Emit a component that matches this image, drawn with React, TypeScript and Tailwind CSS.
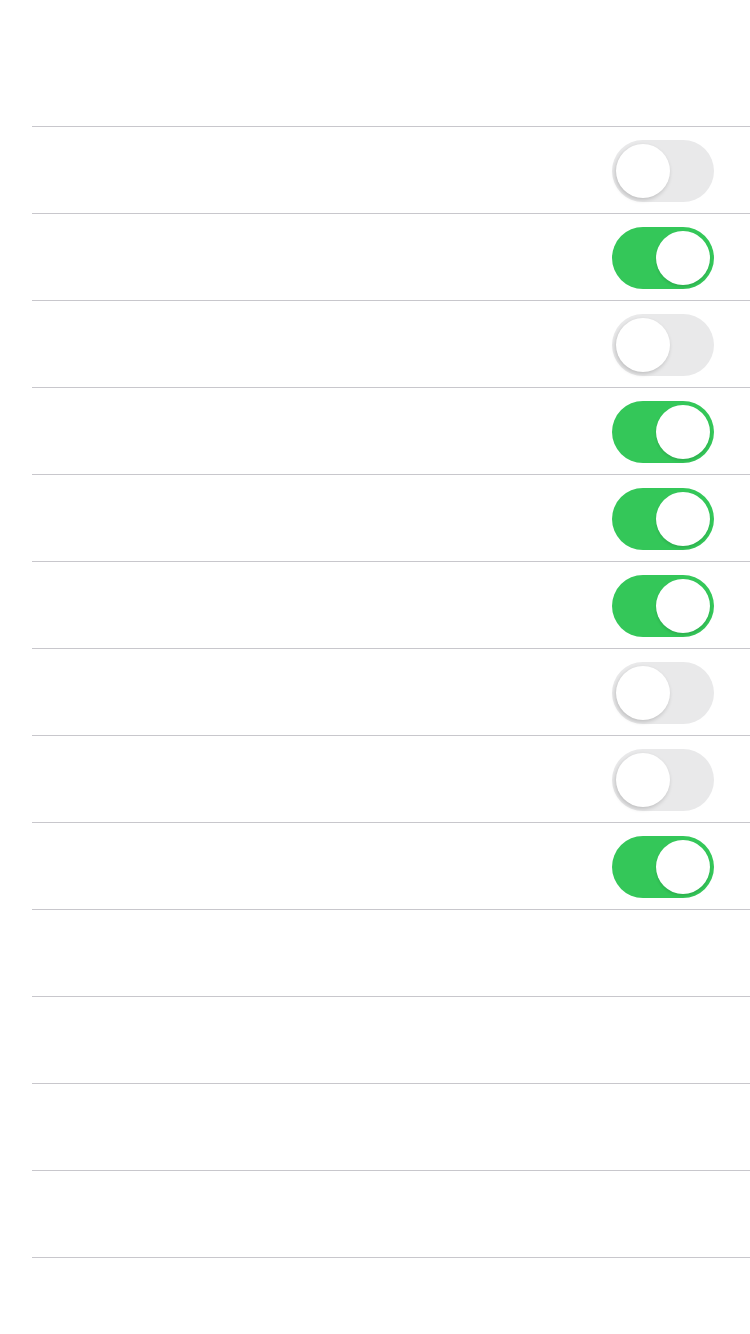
import React from "react";

const states = [false, true, false, true, true, true, false, false, true, null, null, null, null];

function Switch({ on }: { on: boolean }) {
  return (
    <div
      className={
        "relative w-[102px] h-[62px] rounded-full " +
        (on ? "bg-[#34c759]" : "bg-[#e9e9ea]")
      }
    >
      <div
        className={
          "absolute top-[4px] w-[54px] h-[54px] rounded-full bg-white " +
          (on
            ? "left-[44px] shadow-[0_2px_3px_rgba(0,0,0,0.12)]"
            : "left-[4px] shadow-[-1px_2px_4px_rgba(0,0,0,0.18)]")
        }
      />
    </div>
  );
}

export default function App() {
  return (
    <div className="w-[750px] h-[1334px] bg-white pt-[126px] pl-[32px]">
      <div className="border-b border-[#c8c7cc]">
        {states.map((s, i) => (
          <div
            key={i}
            className="h-[87px] border-t border-[#c8c7cc] flex justify-end pr-[36px] pt-[13px]"
          >
            {s !== null && <Switch on={s} />}
          </div>
        ))}
      </div>
    </div>
  );
}
